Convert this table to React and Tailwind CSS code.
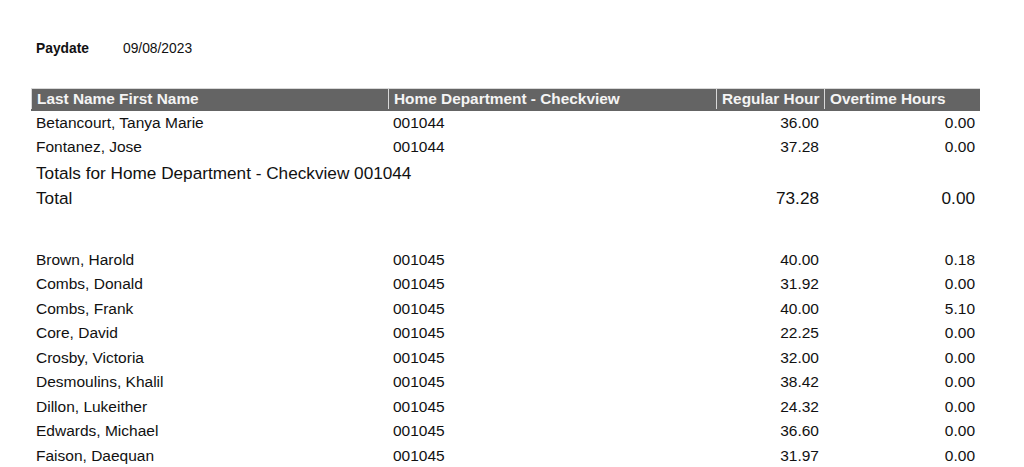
import React from "react";

const group1 = [
  { name: "Betancourt, Tanya Marie", dept: "001044", reg: "36.00", ot: "0.00" },
  { name: "Fontanez, Jose", dept: "001044", reg: "37.28", ot: "0.00" },
];

const group2 = [
  { name: "Brown, Harold", dept: "001045", reg: "40.00", ot: "0.18" },
  { name: "Combs, Donald", dept: "001045", reg: "31.92", ot: "0.00" },
  { name: "Combs, Frank", dept: "001045", reg: "40.00", ot: "5.10" },
  { name: "Core, David", dept: "001045", reg: "22.25", ot: "0.00" },
  { name: "Crosby, Victoria", dept: "001045", reg: "32.00", ot: "0.00" },
  { name: "Desmoulins, Khalil", dept: "001045", reg: "38.42", ot: "0.00" },
  { name: "Dillon, Lukeither", dept: "001045", reg: "24.32", ot: "0.00" },
  { name: "Edwards, Michael", dept: "001045", reg: "36.60", ot: "0.00" },
  { name: "Faison, Daequan", dept: "001045", reg: "31.97", ot: "0.00" },
];

function Row({ row }) {
  return (
    <div className="grid grid-cols-[357px_328px_108px_156px] h-[24.5px] pb-[2px] items-center text-[15.5px] leading-none">
      <div className="pl-[5px] whitespace-nowrap">{row.name}</div>
      <div className="pl-[5px]">{row.dept}</div>
      <div className="text-right pr-[5px]">{row.reg}</div>
      <div className="text-right pr-[5px]">{row.ot}</div>
    </div>
  );
}

export default function App() {
  return (
    <div className="w-[1024px] h-[467px] bg-white overflow-hidden text-[#111] font-['Liberation_Sans',Arial,sans-serif]">
      {/* paydate */}
      <div className="pt-[40px] pl-[36px] flex items-center h-[58px] text-[13.8px] leading-none">
        <span className="w-[87px] font-bold">Paydate</span>
        <span>09/08/2023</span>
      </div>

      <div className="ml-[31px] mt-[30px] w-[949px]">
        {/* header */}
        <div className="grid grid-cols-[357px_328px_108px_156px] h-[23px] pb-[2px] bg-[#646464] text-[#f4f4f4] font-bold text-[15.4px] leading-none border-t border-[#d8d8d8]">
          <div className="pl-[5px] flex items-center border-l border-[#d8d8d8]">Last Name First Name</div>
          <div className="pl-[5px] flex items-center border-l border-[#d8d8d8]">Home Department - Checkview</div>
          <div className="pl-[5px] flex items-center border-l border-[#d8d8d8] whitespace-nowrap">Regular Hour</div>
          <div className="pl-[5px] flex items-center border-l border-[#d8d8d8] whitespace-nowrap">Overtime Hours</div>
        </div>

        {group1.map((r) => (
          <Row key={r.name} row={r} />
        ))}

        <div className="h-[24.5px] pt-[2px] flex items-center pl-[5px] text-[17.2px] leading-none whitespace-nowrap">
          Totals for Home Department - Checkview 001044
        </div>
        <div className="grid grid-cols-[357px_328px_108px_156px] h-[24.5px] pt-[4px] items-center text-[17.2px] leading-none">
          <div className="pl-[5px]">Total</div>
          <div></div>
          <div className="text-right pr-[5px]">73.28</div>
          <div className="text-right pr-[5px]">0.00</div>
        </div>

        <div className="h-[39px]"></div>

        {group2.map((r) => (
          <Row key={r.name} row={r} />
        ))}
      </div>
    </div>
  );
}
